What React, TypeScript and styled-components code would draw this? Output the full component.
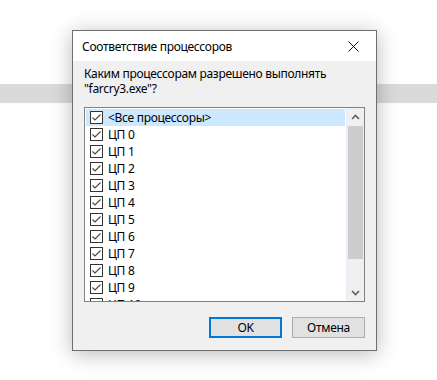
import React from 'react';
import styled, { createGlobalStyle } from 'styled-components';

const GlobalStyle = createGlobalStyle`
    html, body {
        margin: 0;
        padding: 0;
        background: #ffffff;
    }
    body {
        font-family: 'Noto Sans', 'Segoe UI', sans-serif;
        font-size: 12px;
        letter-spacing: -0.3px;
        color: #000000;
    }
`;

const Desktop = styled.div`
    position: relative;
    width: 437px;
    height: 380px;
    overflow: hidden;
    padding: 30px 0 0 72px;
    box-sizing: border-box;
`;

// grey strip of the window lying behind the dialog
const BackStrip = styled.div`
    position: absolute;
    left: 0;
    right: 0;
    top: 84px;
    height: 19px;
    background: #dadada;
`;

const Dialog = styled.div`
    position: relative;
    width: 305px;
    box-sizing: border-box;
    border: 1px solid #6f6f6f;
    background: #f0f0f0;
    box-shadow: 0 3px 20px rgba(0, 0, 0, 0.28);
    display: flex;
    flex-direction: column;
`;

const TitleBar = styled.div`
    height: 30px;
    background: #ffffff;
    display: flex;
    align-items: center;
    justify-content: space-between;
    padding-left: 9px;
`;

const Title = styled.span`
    font-size: 12px;
`;

const CloseButton = styled.div`
    width: 46px;
    height: 30px;
    display: flex;
    align-items: center;
    justify-content: center;
`;

const Body = styled.div`
    padding: 5px 11px 12px 11px;
    display: flex;
    flex-direction: column;
`;

const PromptLine = styled.div`
    height: 15px;
    line-height: 15px;
    white-space: nowrap;
`;

const ListBox = styled.div`
    margin-top: 11px;
    height: 195px;
    box-sizing: border-box;
    border: 1px solid #828282;
    background: #ffffff;
    display: flex;
    overflow: hidden;
`;

const Items = styled.div`
    flex: 1;
    padding: 1px 1px 0 1px;
    overflow: hidden;
`;

const Row = styled.div<{ $selected?: boolean }>`
    height: 17px;
    display: flex;
    align-items: center;
    gap: 5px;
    padding-left: 4px;
    background: ${p => (p.$selected ? '#cce8ff' : 'transparent')};
    white-space: nowrap;
`;

const Box = styled.span`
    width: 13px;
    height: 13px;
    box-sizing: border-box;
    border: 1px solid #333333;
    background: #ffffff;
    display: flex;
    align-items: center;
    justify-content: center;
    flex: none;
`;

const ScrollBar = styled.div`
    width: 17px;
    background: #f0f0f0;
    border-left: 1px solid #e3eef9;
    display: flex;
    flex-direction: column;
    align-items: center;
`;

const ArrowCell = styled.div`
    height: 17px;
    width: 100%;
    display: flex;
    align-items: center;
    justify-content: center;
`;

const Thumb = styled.div`
    width: 15px;
    height: 133px;
    margin-top: 1px;
    background: #cdcdcd;
`;

const Spacer = styled.div`
    flex: 1;
`;

const ButtonRow = styled.div`
    margin-top: 15px;
    display: flex;
    justify-content: flex-end;
    gap: 10px;
`;

const Button = styled.div<{ $default?: boolean }>`
    width: 73px;
    height: 21px;
    box-sizing: border-box;
    background: #e1e1e1;
    border: ${p => (p.$default ? '2px solid #0078d7' : '1px solid #adadad')};
    display: flex;
    align-items: center;
    justify-content: center;
`;

const Check = () => (
    <svg width='11' height='11' viewBox='0 0 11 11'>
        <path d='M1.5 5.5 L4 8 L9.5 2.5' fill='none' stroke='#4a4a4a' strokeWidth='1.2' />
    </svg>
);

const Chevron = ({ up }: { up?: boolean }) => (
    <svg width='9' height='6' viewBox='0 0 9 6'>
        <path
            d={up ? 'M1 5 L4.5 1.5 L8 5' : 'M1 1 L4.5 4.5 L8 1'}
            fill='none'
            stroke='#606060'
            strokeWidth='1.6'
        />
    </svg>
);

const items = ['<Все процессоры>', ...Array.from({ length: 11 }, (_, i) => `ЦП ${i}`)];

const App: React.FC = () => {
    return (
        <>
            <GlobalStyle />
            <Desktop>
                <BackStrip />
                <Dialog>
                    <TitleBar>
                        <Title>Соответствие процессоров</Title>
                        <CloseButton>
                            <svg width='11' height='11' viewBox='0 0 11 11'>
                                <path d='M0.5 0.5 L10.5 10.5 M10.5 0.5 L0.5 10.5' stroke='#111' strokeWidth='1' />
                            </svg>
                        </CloseButton>
                    </TitleBar>
                    <Body>
                        <PromptLine>Каким процессорам разрешено выполнять</PromptLine>
                        <PromptLine>"farcry3.exe"?</PromptLine>
                        <ListBox>
                            <Items>
                                {items.map((label, i) => (
                                    <Row key={label} $selected={i === 0}>
                                        <Box><Check /></Box>
                                        <span>{label}</span>
                                    </Row>
                                ))}
                            </Items>
                            <ScrollBar>
                                <ArrowCell><Chevron up /></ArrowCell>
                                <Thumb />
                                <Spacer />
                                <ArrowCell><Chevron /></ArrowCell>
                            </ScrollBar>
                        </ListBox>
                        <ButtonRow>
                            <Button $default>OK</Button>
                            <Button>Отмена</Button>
                        </ButtonRow>
                    </Body>
                </Dialog>
            </Desktop>
        </>
    );
};

export default App;
